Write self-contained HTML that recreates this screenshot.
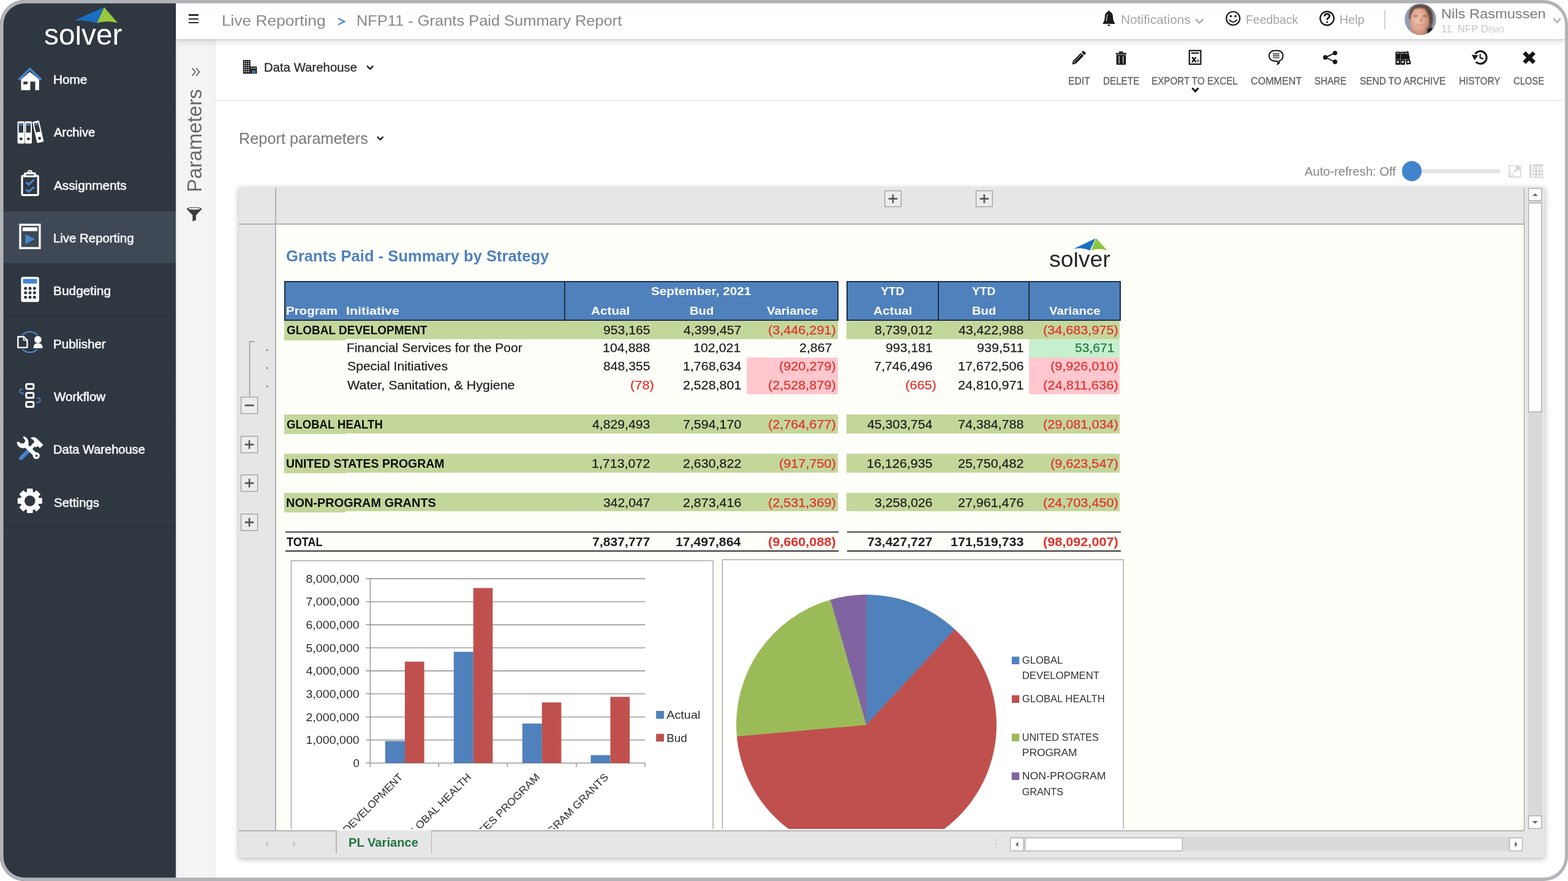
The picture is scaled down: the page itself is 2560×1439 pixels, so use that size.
<!DOCTYPE html>
<html lang="en">
<head>
<meta charset="utf-8">
<title>Solver - Live Reporting - NFP11 - Grants Paid Summary Report</title>
<style>
html,body{margin:0;padding:0;background:#fff;}
body{width:2560px;height:1439px;position:relative;font-family:"Liberation Sans",sans-serif;}
#app{position:absolute;left:0;top:0;width:2560px;height:1439px;overflow:hidden;filter:opacity(1);will-change:transform;}
.a{position:absolute;display:block;}
.t{position:absolute;white-space:pre;line-height:1;display:block;}
.rot{position:absolute;width:0;height:0;transform-origin:0 0;}
svg{overflow:visible;will-change:transform;}
svg text{font-family:"Liberation Sans",sans-serif;}
</style>
</head>
<body>
<div id="app">
<div class="a" style="left:288px;top:0px;width:2272px;height:1439px;background:#ffffff;"></div>
<aside id="sidebar">
<div id="side" class="a" style="left:0;top:0;width:287.2px;height:1439px;background:#2f3741"></div>
<div class="a" style="left:287.2px;top:64px;width:1.4px;height:1375px;background:rgba(0,0,0,.10);"></div>
<div class="a" style="left:0px;top:345.3px;width:287.2px;height:84.4px;background:#3e4955;"></div>
<div class="a" style="left:0px;top:84px;width:287.2px;height:1px;background:rgba(0,0,0,.13);"></div>
<div class="a" style="left:0px;top:85px;width:287.2px;height:1px;background:rgba(255,255,255,.025);"></div>
<div class="a" style="left:0px;top:170.33px;width:287.2px;height:1px;background:rgba(0,0,0,.13);"></div>
<div class="a" style="left:0px;top:171.33px;width:287.2px;height:1px;background:rgba(255,255,255,.025);"></div>
<div class="a" style="left:0px;top:256.66px;width:287.2px;height:1px;background:rgba(0,0,0,.13);"></div>
<div class="a" style="left:0px;top:257.66px;width:287.2px;height:1px;background:rgba(255,255,255,.025);"></div>
<div class="a" style="left:0px;top:515.65px;width:287.2px;height:1px;background:rgba(0,0,0,.13);"></div>
<div class="a" style="left:0px;top:516.65px;width:287.2px;height:1px;background:rgba(255,255,255,.025);"></div>
<div class="a" style="left:0px;top:601.98px;width:287.2px;height:1px;background:rgba(0,0,0,.13);"></div>
<div class="a" style="left:0px;top:602.98px;width:287.2px;height:1px;background:rgba(255,255,255,.025);"></div>
<div class="a" style="left:0px;top:688.31px;width:287.2px;height:1px;background:rgba(0,0,0,.13);"></div>
<div class="a" style="left:0px;top:689.31px;width:287.2px;height:1px;background:rgba(255,255,255,.025);"></div>
<div class="a" style="left:0px;top:774.64px;width:287.2px;height:1px;background:rgba(0,0,0,.13);"></div>
<div class="a" style="left:0px;top:775.64px;width:287.2px;height:1px;background:rgba(255,255,255,.025);"></div>
<div class="a" style="left:0px;top:860.97px;width:287.2px;height:1px;background:rgba(0,0,0,.13);"></div>
<div class="a" style="left:0px;top:861.97px;width:287.2px;height:1px;background:rgba(255,255,255,.025);"></div>
<div class="a" style="left:0px;top:343.6px;width:287.2px;height:1.7px;background:#2a313b;"></div>
<div class="a" style="left:0px;top:429.7px;width:287.2px;height:1.2px;background:#2c333d;"></div>
<svg class="a" style="left:118px;top:8px;" width="80" height="34" viewBox="118 8 80 34"><path d="M121 33.6 L168.9 12.2 L158.6 37.6 Q141 32.4 121 33.6Z" fill="#1a6fc4"/><path d="M170.0 11.8 L192.2 37.6 Q175 32.6 158.4 37.6Z" fill="#97c93d"/></svg>
<span class="t" style="left:71.61px;top:32px;font-size:48.5px;color:#ffffff;transform-origin:0 0;transform:scaleX(0.9858);clip-path:inset(10.5px -4px -12px -4px);">solver</span>
<span class="t" style="left:87.14px;top:121px;font-size:19.6px;color:#f4f4f4;transform-origin:0 0;transform:scaleX(1.0590);-webkit-text-stroke:0.62px #f4f4f4;">Home</span>
<span class="t" style="left:88.20px;top:207px;font-size:19.6px;color:#f4f4f4;transform-origin:0 0;transform:scaleX(1.0285);-webkit-text-stroke:0.62px #f4f4f4;">Archive</span>
<span class="t" style="left:88.20px;top:294px;font-size:19.6px;color:#f4f4f4;transform-origin:0 0;transform:scaleX(1.0572);-webkit-text-stroke:0.62px #f4f4f4;">Assignments</span>
<span class="t" style="left:87.16px;top:380px;font-size:19.6px;color:#f4f4f4;transform-origin:0 0;transform:scaleX(1.0406);-webkit-text-stroke:0.62px #f4f4f4;">Live Reporting</span>
<span class="t" style="left:87.13px;top:466px;font-size:19.6px;color:#f4f4f4;transform-origin:0 0;transform:scaleX(1.0654);-webkit-text-stroke:0.62px #f4f4f4;">Budgeting</span>
<span class="t" style="left:87.15px;top:553px;font-size:19.6px;color:#f4f4f4;transform-origin:0 0;transform:scaleX(1.0485);-webkit-text-stroke:0.62px #f4f4f4;">Publisher</span>
<span class="t" style="left:88.20px;top:639px;font-size:19.6px;color:#f4f4f4;transform-origin:0 0;transform:scaleX(1.0499);-webkit-text-stroke:0.62px #f4f4f4;">Workflow</span>
<span class="t" style="left:87.18px;top:725px;font-size:19.6px;color:#f4f4f4;transform-origin:0 0;transform:scaleX(1.0240);-webkit-text-stroke:0.62px #f4f4f4;">Data Warehouse</span>
<span class="t" style="left:88.20px;top:812px;font-size:19.6px;color:#f4f4f4;transform-origin:0 0;transform:scaleX(1.0451);-webkit-text-stroke:0.62px #f4f4f4;">Settings</span>
<svg class="a" style="left:26px;top:106px;" width="46" height="44" viewBox="26 106 46 44"><path d="M34.4 147.2V129.6L48.8 117.4 63.8 129.6V147.2H57.5V133.2H49.4V147.2Z M38.2 133.2H45V137.7H38.2Z" fill="#ffffff" fill-rule="evenodd"/><path d="M30.6 130.4L48.8 112.4 67.2 130.4" fill="none" stroke="#4586cb" stroke-width="3.6"/></svg>
<svg class="a" style="left:24px;top:192px;" width="52" height="48" viewBox="24 192 52 48"><rect x="28.6" y="198.2" width="11.4" height="36.2" rx="1.4" fill="#ffffff"/><rect x="30.6" y="201.4" width="7.4" height="15.2" fill="#2f3741"/><rect x="31.6" y="202.4" width="5.4" height="2.6" fill="#4586cb"/><circle cx="34.3" cy="226.8" r="2.4" fill="#2f3741"/><rect x="40.6" y="198.2" width="11.4" height="36.2" rx="1.4" fill="#ffffff"/><rect x="42.6" y="201.4" width="7.4" height="15.2" fill="#2f3741"/><rect x="43.6" y="202.4" width="5.4" height="2.6" fill="#4586cb"/><circle cx="46.3" cy="226.8" r="2.4" fill="#2f3741"/><g transform="rotate(-13 62.2 215.4)"><rect x="56.6" y="197.4" width="11.2" height="35.6" rx="1.4" fill="#ffffff"/><rect x="58.6" y="200.6" width="7.2" height="15.2" fill="#2f3741"/><rect x="59.6" y="201.6" width="5.2" height="2.6" fill="#4586cb"/><circle cx="62.2" cy="226" r="2.4" fill="#2f3741"/></g></svg>
<svg class="a" style="left:30px;top:274px;" width="40" height="50" viewBox="30 274 40 50"><rect x="36" y="287.2" width="26.2" height="31.4" rx="1.6" fill="none" stroke="#ffffff" stroke-width="3.2"/><path d="M39 289.6V284.6Q39 281.6 42 281.6H44.6Q45.2 277.6 48.9 277.6 52.6 277.6 53.2 281.6H55.8Q58.8 281.6 58.8 284.6V289.6Z" fill="#ffffff"/><rect x="42.2" y="284.4" width="13.4" height="2" rx="1" fill="#2f3741"/><circle cx="48.9" cy="280.6" r="1" fill="#2f3741"/><path d="M42.6 297.6L46.8 301.4 55.6 293.4" fill="none" stroke="#4586cb" stroke-width="3.2"/><path d="M42.6 309.6L46.8 313.4 55.6 305.4" fill="none" stroke="#4586cb" stroke-width="3.2"/></svg>
<svg class="a" style="left:28px;top:362px;" width="42" height="48" viewBox="28 362 42 48"><rect x="33" y="367.1" width="31.9" height="38.1" fill="none" stroke="#ffffff" stroke-width="3.4"/><rect x="36.9" y="371.3" width="24.1" height="6.2" fill="#ffffff"/><path d="M41.4 382.4L57 390.6 41.4 398.9Z" fill="#4586cb"/></svg>
<svg class="a" style="left:30px;top:448px;" width="40" height="50" viewBox="30 448 40 50"><rect x="34.4" y="452.2" width="29.4" height="41.1" rx="3" fill="#ffffff"/><rect x="37.5" y="455.6" width="23" height="7.6" rx="1.6" fill="#4586cb"/><circle cx="41.7" cy="471" r="2.5" fill="#2f3741"/><circle cx="41.7" cy="478.2" r="2.5" fill="#2f3741"/><circle cx="41.7" cy="485.5" r="2.5" fill="#2f3741"/><circle cx="49" cy="471" r="2.5" fill="#2f3741"/><circle cx="49" cy="478.2" r="2.5" fill="#2f3741"/><circle cx="49" cy="485.5" r="2.5" fill="#2f3741"/><circle cx="56.3" cy="471" r="2.5" fill="#2f3741"/><circle cx="56.3" cy="478.2" r="2.5" fill="#2f3741"/><circle cx="56.3" cy="485.5" r="2.5" fill="#2f3741"/></svg>
<svg class="a" style="left:24px;top:536px;" width="50" height="46" viewBox="24 536 50 46"><path d="M36 547.6A17 17 0 0 1 61.6 547.6" fill="none" stroke="#4586cb" stroke-width="2.2"/><path d="M36.8 570.6A17 17 0 0 0 60.8 570.6" fill="none" stroke="#4586cb" stroke-width="2.2"/><path d="M29.3 550V567.6H44.4V555.6L38.8 550Z" fill="none" stroke="#ffffff" stroke-width="2.4" stroke-linejoin="round"/><path d="M38.6 550V555.8H44.4" fill="none" stroke="#ffffff" stroke-width="1.6"/><circle cx="61.9" cy="554.6" r="5.9" fill="#ffffff"/><path d="M54.4 568.8Q54.4 560.4 61.9 560.4 69.8 560.4 69.8 568.8Z" fill="#ffffff"/></svg>
<svg class="a" style="left:28px;top:620px;" width="44" height="50" viewBox="28 620 44 50"><rect x="42.8" y="627.2" width="12" height="8" rx="1.6" fill="none" stroke="#ffffff" stroke-width="3"/><rect x="42.8" y="641.8" width="12" height="8" rx="1.6" fill="none" stroke="#ffffff" stroke-width="3"/><rect x="42.8" y="656.6" width="12" height="8" rx="1.6" fill="none" stroke="#ffffff" stroke-width="3"/><path d="M37.4 635.6Q31.8 634.6 32.2 639.4 32.8 642.6 37 642.4" fill="none" stroke="#4586cb" stroke-width="1.8"/><path d="M36.4 640.2L39.4 642.6 36.4 644.8Z" fill="#4586cb"/><path d="M60.6 650.4Q66.2 649.4 65.8 654.2 65.2 657.4 61 657.2" fill="none" stroke="#4586cb" stroke-width="1.8"/><path d="M61.6 655L58.6 657.4 61.6 659.6Z" fill="#4586cb"/></svg>
<svg class="a" style="left:24px;top:708px;" width="50" height="46" viewBox="24 708 50 46"><path d="M34.4 748.2L45.2 737.4" stroke="#4586cb" stroke-width="6.4" stroke-linecap="round" fill="none"/><path d="M42 727.4L58.4 743.6" stroke="#ffffff" stroke-width="6.6" fill="none"/><circle cx="59.2" cy="744.2" r="5.6" fill="#ffffff"/><circle cx="59.6" cy="744.6" r="1.9" fill="#2f3741"/><path d="M27.4 722.6Q28.2 731.6 37.6 732.2 44.6 731.6 46.6 725.2 47.6 716.6 39.4 712.4L37.4 713.8 41.4 719.8 39.6 724 34.6 724.6 30 721.2Z" fill="#ffffff"/><path d="M50.6 731.8L57.6 724.2" stroke="#ffffff" stroke-width="5.6" fill="none"/><path d="M50.6 714.6Q57.6 712.6 62.4 718.4L70.6 726.4 65.2 732 61.4 728.4 58.6 731 54.2 726.4 56.6 723.6Q55.6 718 50.6 716.2Z" fill="#ffffff"/></svg>
<svg class="a" style="left:26px;top:795px;" width="46" height="46" viewBox="26 795 46 46"><path d="M44.7 804.3 L45.0 799.0 L52.6 799.0 L52.9 804.3 L55.6 805.4 L59.6 801.9 L65.0 807.3 L61.5 811.3 L62.6 814.0 L67.9 814.3 L67.9 821.9 L62.6 822.2 L61.5 824.9 L65.0 828.9 L59.6 834.3 L55.6 830.8 L52.9 831.9 L52.6 837.2 L45.0 837.2 L44.7 831.9 L42.0 830.8 L38.0 834.3 L32.6 828.9 L36.1 824.9 L35.0 822.2 L29.7 821.9 L29.7 814.3 L35.0 814.0 L36.1 811.3 L32.6 807.3 L38.0 801.9 L42.0 805.4Z" fill="#ffffff" stroke="#ffffff" stroke-width="1.8" stroke-linejoin="round"/><circle cx="48.8" cy="818.1" r="8.8" fill="#2f3741"/></svg>
</aside>
<section id="params">
<div class="a" style="left:288.6px;top:64px;width:62.6px;height:1375px;background:#f4f4f4;"></div>
<div class="a" style="left:351.2px;top:64px;width:1px;height:1375px;background:#ebebeb;"></div>
<div class="a" style="left:352.2px;top:163.4px;width:2208px;height:1.3px;background:#eeeeee;"></div>
<svg class="a" style="left:310px;top:108px;" width="20" height="20" viewBox="310 108 20 20"><path d="M313.8 111.4L319 117.6 313.8 123.8M320.4 111.4L325.6 117.6 320.4 123.8" fill="none" stroke="#4a4a4a" stroke-width="1.5"/></svg>
<div class="rot" style="left:329.40px;top:312.20px;transform:rotate(-90deg)"><span class="t" style="left:-1.95px;top:-28.00px;font-size:33.4px;color:#686868;transform-origin:0 0;transform:scaleX(0.9766);">Parameters</span></div>
<svg class="a" style="left:302px;top:336px;" width="30" height="28" viewBox="302 336 30 28"><path d="M304.8 341.6Q304.8 338.4 317.2 338.4 329.6 338.4 329.6 341.6L320 351.4V359.4L314.4 361.4V351.4Z" fill="#3c3c3c"/><ellipse cx="317.2" cy="341" rx="10.2" ry="1.5" fill="#f4f4f4"/></svg>
</section>
<header id="topbar">
<div id="top" class="a" style="left:288px;top:0;width:2272px;height:63.8px;background:#fff;box-shadow:0 1px 3px rgba(0,0,0,.18),0 5px 12px rgba(0,0,0,.10)"></div>
<div class="a" style="left:308px;top:23.4px;width:16.2px;height:2.6px;background:#2b2b2b;"></div>
<div class="a" style="left:308px;top:29.6px;width:16.2px;height:2.6px;background:#2b2b2b;"></div>
<div class="a" style="left:308px;top:35.8px;width:16.2px;height:2.6px;background:#2b2b2b;"></div>
<span class="t" style="left:361.68px;top:22px;font-size:24.8px;color:#888888;transform-origin:0 0;transform:scaleX(1.0604);">Live Reporting</span>
<svg class="a" style="left:550px;top:26px;" width="16" height="18" viewBox="550 26 16 18"><path d="M552.2 30L562.4 35.2 552.2 40.4" fill="none" stroke="#3a85d6" stroke-width="2.1"/></svg>
<span class="t" style="left:582.45px;top:22px;font-size:24.8px;color:#888888;transform-origin:0 0;transform:scaleX(1.0252);">NFP11 - Grants Paid Summary Report</span>
<svg class="a" style="left:1798px;top:15px;" width="26" height="30" viewBox="1798 15 26 30"><path d="M1810.4 17.2Q1812.2 17.2 1812.2 19.2 1816.8 20.6 1817 27 1817.2 34.6 1820.2 37.8V39H1800.6V37.8Q1803.6 34.6 1803.8 27 1804 20.6 1808.6 19.2 1808.6 17.2 1810.4 17.2Z" fill="#1a1a1a"/><path d="M1808 40.2H1812.8Q1812.6 42.4 1810.4 42.4 1808.2 42.4 1808 40.2Z" fill="#1a1a1a"/><path d="M1806.4 34.8Q1807 26.4 1808.2 23.2" stroke="#fff" stroke-width="1" fill="none"/></svg>
<span class="t" style="left:1830.16px;top:22px;font-size:20.2px;color:#a4a4a4;transform-origin:0 0;transform:scaleX(1.0362);">Notifications</span>
<svg class="a" style="left:1949px;top:28px;" width="18" height="14" viewBox="1949 28 18 14"><path d="M1952 31.2L1958.2 37.6 1964.4 31.2" fill="none" stroke="#b0b0b0" stroke-width="2.8"/></svg>
<svg class="a" style="left:1999px;top:16px;" width="28" height="28" viewBox="1999 16 28 28"><circle cx="2013.2" cy="30" r="11" fill="none" stroke="#1a1a1a" stroke-width="2.2"/><circle cx="2009.4" cy="26.4" r="1.8" fill="#1a1a1a"/><circle cx="2017" cy="26.4" r="1.8" fill="#1a1a1a"/><path d="M2006.6 32.2Q2013.2 39.6 2019.8 32.2" fill="none" stroke="#1a1a1a" stroke-width="2"/></svg>
<span class="t" style="left:2033.84px;top:22px;font-size:20.2px;color:#a4a4a4;transform-origin:0 0;transform:scaleX(0.9620);">Feedback</span>
<svg class="a" style="left:2152px;top:16px;" width="30" height="28" viewBox="2152 16 30 28"><circle cx="2166.6" cy="30" r="11.2" fill="none" stroke="#1a1a1a" stroke-width="2.4"/><path d="M2162.6 26.6Q2162.8 22.8 2166.6 22.8 2170.6 22.8 2170.6 26.2 2170.6 28 2168.6 29.2 2166.8 30.4 2166.8 32.4" fill="none" stroke="#1a1a1a" stroke-width="3"/><circle cx="2166.8" cy="36" r="1.6" fill="#1a1a1a"/></svg>
<span class="t" style="left:2187.02px;top:22px;font-size:20.2px;color:#a4a4a4;transform-origin:0 0;transform:scaleX(0.9754);">Help</span>
<div class="a" style="left:2260.4px;top:16px;width:1.2px;height:31.6px;background:#d2d2d2;"></div>
<svg class="a" style="left:2290px;top:3px;" width="58" height="58" viewBox="2290 3 58 58"><defs><clipPath id="av"><circle cx="2319.1" cy="31.6" r="25.7"/></clipPath><radialGradient id="sk" cx="0.42" cy="0.40" r="0.62"><stop offset="0" stop-color="#f3c7b0"/><stop offset="0.55" stop-color="#e0a48e"/><stop offset="1" stop-color="#b67c68"/></radialGradient><filter id="bl" x="-20%" y="-20%" width="140%" height="140%"><feGaussianBlur stdDeviation="0.9"/></filter></defs><circle cx="2319.1" cy="31.6" r="25.7" fill="#919eb3"/><g clip-path="url(#av)"><g filter="url(#bl)"><path d="M2300.6 30Q2299.6 7.5 2318.6 7.2 2339.8 7 2339.8 31Q2339.6 42 2334 45L2303.6 36Z" fill="#5b463d"/><ellipse cx="2317.8" cy="36.5" rx="15.6" ry="25.6" fill="url(#sk)"/><path d="M2303.6 16.5Q2309 10.6 2318.6 10.4 2328.6 10.6 2333.4 17.6 2327 13.6 2318.6 13.8 2309.6 14 2303.6 16.5Z" fill="#6a5247"/><ellipse cx="2311.4" cy="25.9" rx="3.6" ry="1.5" fill="#6e4a3e" opacity=".75"/><ellipse cx="2326.2" cy="26.3" rx="3.4" ry="1.5" fill="#6e4a3e" opacity=".75"/><path d="M2320 27Q2321.6 32 2320.6 36.6 2318.2 36 2318.6 33Z" fill="#8c5a4b" opacity=".7"/><path d="M2310.6 39.8Q2318 42.6 2325.4 39.6 2318 45 2310.6 39.8Z" fill="#a5645a"/><path d="M2329.5 46.5L2337 44 2342 52 2330 58Z" fill="#1c212c"/></g></g></svg>
<span class="t" style="left:2353.04px;top:12px;font-size:22.3px;color:#7c7c7c;transform-origin:0 0;transform:scaleX(1.0600);">Nils Rasmussen</span>
<span class="t" style="left:2353.13px;top:39px;font-size:17.4px;color:#c8c8c8;transform-origin:0 0;transform:scaleX(0.9652);">11. NFP D</span>
<span class="t" style="left:2429.53px;top:42px;font-size:13px;color:#c8c8c8;transform-origin:0 0;transform:scaleX(0.8702);">EMO</span>
<svg class="a" style="left:2532px;top:26px;" width="20" height="16" viewBox="2532 26 20 16"><path d="M2536.2 30L2542 36.6 2547.8 30" fill="none" stroke="#b8b8b8" stroke-width="2.8"/></svg>
</header>
<section id="toolbar">
<svg class="a" style="left:395px;top:96px;" width="26" height="26" viewBox="395 96 26 26"><path d="M396.8 98H408.8V120.4H396.8Z" fill="#1c1c1c"/><path d="M408.8 108.6H419.4V120.4H408.8Z" fill="#1c1c1c"/><rect x="398.6" y="99.8" width="1.7" height="1.7" fill="#fff"/><rect x="401.8" y="99.8" width="1.7" height="1.7" fill="#fff"/><rect x="405" y="99.8" width="1.7" height="1.7" fill="#fff"/><rect x="398.6" y="103.1" width="1.7" height="1.7" fill="#fff"/><rect x="401.8" y="103.1" width="1.7" height="1.7" fill="#fff"/><rect x="405" y="103.1" width="1.7" height="1.7" fill="#fff"/><rect x="398.6" y="106.4" width="1.7" height="1.7" fill="#fff"/><rect x="401.8" y="106.4" width="1.7" height="1.7" fill="#fff"/><rect x="405" y="106.4" width="1.7" height="1.7" fill="#fff"/><rect x="398.6" y="109.7" width="1.7" height="1.7" fill="#fff"/><rect x="401.8" y="109.7" width="1.7" height="1.7" fill="#fff"/><rect x="405" y="109.7" width="1.7" height="1.7" fill="#fff"/><rect x="398.6" y="113" width="1.7" height="1.7" fill="#fff"/><rect x="401.8" y="113" width="1.7" height="1.7" fill="#fff"/><rect x="405" y="113" width="1.7" height="1.7" fill="#fff"/><rect x="398.6" y="116.3" width="1.7" height="1.7" fill="#fff"/><rect x="401.8" y="116.3" width="1.7" height="1.7" fill="#fff"/><rect x="405" y="116.3" width="1.7" height="1.7" fill="#fff"/><rect x="410.2" y="110.6" width="1.6" height="1.6" fill="#fff"/><rect x="413.2" y="110.6" width="1.6" height="1.6" fill="#fff"/><rect x="416.2" y="110.6" width="1.6" height="1.6" fill="#fff"/><rect x="411.6" y="115" width="5.4" height="5.4" fill="#5b8ec9"/><rect x="413.8" y="116.4" width="1.2" height="4" fill="#1c1c1c"/></svg>
<span class="t" style="left:431.22px;top:100px;font-size:20.7px;color:#2e2e2e;transform-origin:0 0;transform:scaleX(0.9845);-webkit-text-stroke:0.35px #2e2e2e;">Data Warehouse</span>
<svg class="a" style="left:596px;top:104px;" width="16" height="14" viewBox="596 104 16 14"><path d="M599.2 107.6L604.2 112.8 609.2 107.6" fill="none" stroke="#111" stroke-width="2.3"/></svg>
<span class="t" style="left:1744.45px;top:124px;font-size:16.5px;color:#5e5e5e;transform-origin:0 0;transform:scaleX(0.9451);-webkit-text-stroke:0.3px #5e5e5e;">EDIT</span>
<span class="t" style="left:1800.58px;top:124px;font-size:16.5px;color:#5e5e5e;transform-origin:0 0;transform:scaleX(0.9227);-webkit-text-stroke:0.3px #5e5e5e;">DELETE</span>
<span class="t" style="left:1879.88px;top:124px;font-size:16.5px;color:#5e5e5e;transform-origin:0 0;transform:scaleX(0.9208);-webkit-text-stroke:0.3px #5e5e5e;">EXPORT TO EXCEL</span>
<span class="t" style="left:2042.00px;top:124px;font-size:16.5px;color:#5e5e5e;transform-origin:0 0;transform:scaleX(0.9770);-webkit-text-stroke:0.3px #5e5e5e;">COMMENT</span>
<span class="t" style="left:2146.40px;top:124px;font-size:16.5px;color:#5e5e5e;transform-origin:0 0;transform:scaleX(0.9236);-webkit-text-stroke:0.3px #5e5e5e;">SHARE</span>
<span class="t" style="left:2220.20px;top:124px;font-size:16.5px;color:#5e5e5e;transform-origin:0 0;transform:scaleX(0.9346);-webkit-text-stroke:0.3px #5e5e5e;">SEND TO ARCHIVE</span>
<span class="t" style="left:2381.77px;top:124px;font-size:16.5px;color:#5e5e5e;transform-origin:0 0;transform:scaleX(0.9256);-webkit-text-stroke:0.3px #5e5e5e;">HISTORY</span>
<span class="t" style="left:2471.30px;top:124px;font-size:16.5px;color:#5e5e5e;transform-origin:0 0;transform:scaleX(0.8939);-webkit-text-stroke:0.3px #5e5e5e;">CLOSE</span>
<svg class="a" style="left:1748px;top:80px;" width="28" height="28" viewBox="1748 80 28 28"><path d="M1768.6 82.6L1773.2 87.2 1770.4 90 1765.8 85.4Z" fill="#161616"/><path d="M1764.8 86.4L1769.4 91 1756.2 104.2 1750.6 105.2 1751.6 99.6Z" fill="#161616"/><path d="M1766 88.6L1754 100.6" stroke="#fff" stroke-width="0.9" fill="none"/><path d="M1752.6 100.4L1755.4 103.2" stroke="#fff" stroke-width="0.9" fill="none"/></svg>
<svg class="a" style="left:1818px;top:81px;" width="26" height="28" viewBox="1818 81 26 28"><rect x="1821.6" y="86.4" width="17.6" height="2.4" rx="0.8" fill="#161616"/><rect x="1827" y="84" width="6.8" height="2.6" rx="0.8" fill="#161616"/><path d="M1822.6 89.6H1838.2V104.2Q1838.2 105.8 1836.6 105.8H1824.2Q1822.6 105.8 1822.6 104.2Z" fill="#161616"/><rect x="1826" y="91.4" width="2.2" height="12.4" fill="#9a9a9a"/><rect x="1832.6" y="91.4" width="2.2" height="12.4" fill="#9a9a9a"/></svg>
<svg class="a" style="left:1938px;top:79px;" width="26" height="30" viewBox="1938 79 26 30"><rect x="1941.8" y="82.6" width="18.6" height="22.2" fill="none" stroke="#161616" stroke-width="2.2"/><rect x="1944.8" y="85.6" width="12.6" height="2.2" fill="#161616"/><path d="M1946.2 93.2L1952.6 101.4M1952.6 93.2L1946.2 101.4" stroke="#161616" stroke-width="2.4" fill="none"/><rect x="1954" y="97.2" width="3.6" height="4.2" fill="#777"/></svg>
<svg class="a" style="left:1943px;top:140px;" width="18" height="14" viewBox="1943 140 18 14"><path d="M1946.4 143.8L1951.5 149.2 1956.6 143.8" fill="none" stroke="#111" stroke-width="3"/></svg>
<svg class="a" style="left:2068px;top:79px;" width="30" height="30" viewBox="2068 79 30 30"><path d="M2083.4 82.6Q2094.6 82.6 2094.6 91.2 2094.6 97.6 2088.6 99.4 2089.6 103 2086 104.6 2087.4 101.6 2085.2 100 2072 100.2 2072 91.2 2072 82.6 2083.4 82.6Z" fill="none" stroke="#161616" stroke-width="2"/><path d="M2078 88H2088.8M2078 91.2H2088.8M2078 94.4H2088.8" stroke="#161616" stroke-width="1.4" fill="none"/></svg>
<svg class="a" style="left:2157px;top:80px;" width="30" height="28" viewBox="2157 80 30 28"><path d="M2179.4 86.6L2164 93.8 2179.4 101" fill="none" stroke="#161616" stroke-width="1.9"/><circle cx="2179.6" cy="86.6" r="3.7" fill="#161616"/><circle cx="2163.8" cy="93.8" r="3.7" fill="#161616"/><circle cx="2179.6" cy="101" r="3.7" fill="#161616"/></svg>
<svg class="a" style="left:2275px;top:81px;" width="32" height="28" viewBox="2275 81 32 28"><rect x="2278.4" y="84.4" width="7.6" height="21.4" rx="0.8" fill="#161616"/><rect x="2280" y="86.2" width="4.4" height="1.8" fill="#9a9a9a"/><rect x="2280.6" y="99.8" width="3.2" height="3" fill="#fff"/><rect x="2278.4" y="96.8" width="7.6" height="1" fill="#777"/><rect x="2286.4" y="84.4" width="7.6" height="21.4" rx="0.8" fill="#161616"/><rect x="2288" y="86.2" width="4.4" height="1.8" fill="#9a9a9a"/><rect x="2288.6" y="99.8" width="3.2" height="3" fill="#fff"/><rect x="2286.4" y="96.8" width="7.6" height="1" fill="#777"/><g transform="rotate(-12 2298 95)"><rect x="2294.2" y="84.2" width="7.4" height="21" rx="0.8" fill="#161616"/><rect x="2295.8" y="86" width="4.2" height="1.8" fill="#9a9a9a"/><rect x="2296.4" y="99.6" width="3" height="3" fill="#fff"/><rect x="2294.2" y="96.6" width="7.4" height="1" fill="#777"/></g></svg>
<svg class="a" style="left:2400px;top:79px;" width="32" height="30" viewBox="2400 79 32 30"><path d="M2408.4 88.2A10.2 10.2 0 1 1 2409.6 101" fill="none" stroke="#161616" stroke-width="3.1"/><path d="M2402.8 89.6L2413.4 90.2 2407.4 98.4Z" fill="#161616"/><path d="M2416.6 88.2V94.4L2421.8 96.2" fill="none" stroke="#161616" stroke-width="2.2"/></svg>
<svg class="a" style="left:2483px;top:80px;" width="28" height="28" viewBox="2483 80 28 28"><path d="M2488.6 86L2504.6 102.2M2504.6 86L2488.6 102.2" stroke="#161616" stroke-width="6.6" fill="none"/></svg>
<span class="t" style="left:389.57px;top:214px;font-size:24.9px;color:#787878;transform-origin:0 0;transform:scaleX(1.0163);">Report parameters</span>
<svg class="a" style="left:613px;top:219px;" width="16" height="14" viewBox="613 219 16 14"><path d="M616 223.2L620.8 228.2 625.6 223.2" fill="none" stroke="#111" stroke-width="2.2"/></svg>
<span class="t" style="left:2129.60px;top:270px;font-size:20.5px;color:#868686;transform-origin:0 0;transform:scaleX(0.9851);">Auto-refresh: Off</span>
<div class="a" style="left:2305px;top:275.9px;width:144.5px;height:7.2px;background:#e4e4e4;border-radius:4px;"></div>
<div class="a" style="left:2289px;top:263.3px;width:32.4px;height:32.4px;background:#3f84cc;border-radius:50%;"></div>
<svg class="a" style="left:2460px;top:266px;" width="26" height="28" viewBox="2460 266 26 28"><rect x="2464" y="270.6" width="18.6" height="18.6" fill="none" stroke="#d4d4d4" stroke-width="1.6"/><rect x="2465.4" y="283.4" width="4.4" height="4.4" fill="none" stroke="#d4d4d4" stroke-width="1.2"/><path d="M2472 281L2479.6 273.4M2474.4 273.2H2479.8V278.6" stroke="#cfcfcf" stroke-width="2.4" fill="none"/></svg>
<svg class="a" style="left:2494px;top:266px;" width="28" height="28" viewBox="2494 266 28 28"><rect x="2497" y="268.4" width="3.2" height="22.4" fill="#d2d2d2"/><rect x="2502.2" y="268.4" width="17.2" height="3.4" fill="#d2d2d2"/><rect x="2502.8" y="274" width="4.6" height="4.6" fill="none" stroke="#d2d2d2" stroke-width="1.2"/><rect x="2508.5" y="274" width="4.6" height="4.6" fill="none" stroke="#d2d2d2" stroke-width="1.2"/><rect x="2514.2" y="274" width="4.6" height="4.6" fill="none" stroke="#d2d2d2" stroke-width="1.2"/><rect x="2502.8" y="279.7" width="4.6" height="4.6" fill="none" stroke="#d2d2d2" stroke-width="1.2"/><rect x="2508.5" y="279.7" width="4.6" height="4.6" fill="none" stroke="#d2d2d2" stroke-width="1.2"/><rect x="2514.2" y="279.7" width="4.6" height="4.6" fill="none" stroke="#d2d2d2" stroke-width="1.2"/><rect x="2502.8" y="285.4" width="4.6" height="4.6" fill="none" stroke="#d2d2d2" stroke-width="1.2"/><rect x="2508.5" y="285.4" width="4.6" height="4.6" fill="none" stroke="#d2d2d2" stroke-width="1.2"/><rect x="2514.2" y="285.4" width="4.6" height="4.6" fill="none" stroke="#d2d2d2" stroke-width="1.2"/></svg>
</section>
<main id="report">
<div id="sheet" class="a" style="left:389.6px;top:305.8px;width:2132.8px;height:1095.2px;background:#e6e6e6;box-shadow:0 2px 9px rgba(0,0,0,.30)"></div>
<div class="a" style="left:451.4px;top:367.4px;width:2036.2px;height:988.4px;background:#fefff9;"></div>
<div class="a" style="left:389.6px;top:365.4px;width:2098px;height:1.9px;background:#b2b2b2;"></div>
<div class="a" style="left:449.2px;top:305.8px;width:2px;height:1050px;background:#b2b2b2;"></div>
<div class="a" style="left:2487.7px;top:305.8px;width:1.6px;height:1051px;background:#9a9a9a;"></div>
<div class="a" style="left:389.6px;top:1355.9px;width:159.4px;height:1.8px;background:#b4b4b4;"></div>
<div class="a" style="left:704px;top:1355.9px;width:1783.6px;height:1.8px;background:#b4b4b4;"></div>
<div class="a" style="left:548.2px;top:1356px;width:1.6px;height:38px;background:#b4b4b4;"></div>
<div class="a" style="left:703.6px;top:1356px;width:1.6px;height:38px;background:#b4b4b4;"></div>
<div class="a" style="left:550px;top:1355.8px;width:153.6px;height:2px;background:#e9e9e9;"></div>
<svg class="a" style="left:1443.2px;top:309.8px;" width="29.8" height="29.2" viewBox="1443.2 309.8 29.8 29.2"><rect x="1444.8" y="311.4" width="26.6" height="26" fill="#ececec" stroke="#9d9d9d" stroke-width="1.3"/><path d="M1450.9 324.4H1465.3M1458.1 317.2V331.6" stroke="#555" stroke-width="2.6" fill="none"/></svg>
<svg class="a" style="left:1592px;top:309.8px;" width="29.8" height="29.2" viewBox="1592 309.8 29.8 29.2"><rect x="1593.6" y="311.4" width="26.6" height="26" fill="#ececec" stroke="#9d9d9d" stroke-width="1.3"/><path d="M1599.7 324.4H1614.1M1606.9 317.2V331.6" stroke="#555" stroke-width="2.6" fill="none"/></svg>
<svg class="a" style="left:400px;top:552px;" width="44" height="100" viewBox="400 552 44 100"><path d="M415.4 557.8H407.6V647.6" fill="none" stroke="#9a9a9a" stroke-width="1.5"/><circle cx="436.3" cy="572" r="1.6" fill="#8f8f8f"/><circle cx="436.3" cy="601.1" r="1.6" fill="#8f8f8f"/><circle cx="436.3" cy="631.1" r="1.6" fill="#8f8f8f"/></svg>
<svg class="a" style="left:392.2px;top:646.5px;" width="30.2" height="30.2" viewBox="392.2 646.5 30.2 30.2"><rect x="393.8" y="648.1" width="27" height="27" fill="#ececec" stroke="#9d9d9d" stroke-width="1.3"/><path d="M399.9 661.6H414.7" stroke="#555" stroke-width="2.8" fill="none"/></svg>
<svg class="a" style="left:392.2px;top:710.5px;" width="30.2" height="30.2" viewBox="392.2 710.5 30.2 30.2"><rect x="393.8" y="712.1" width="27" height="27" fill="#ececec" stroke="#9d9d9d" stroke-width="1.3"/><path d="M400.1 725.6H414.5M407.3 718.4V732.8" stroke="#555" stroke-width="2.6" fill="none"/></svg>
<svg class="a" style="left:392.2px;top:774.4px;" width="30.2" height="30.2" viewBox="392.2 774.4 30.2 30.2"><rect x="393.8" y="776" width="27" height="27" fill="#ececec" stroke="#9d9d9d" stroke-width="1.3"/><path d="M400.1 789.5H414.5M407.3 782.3V796.7" stroke="#555" stroke-width="2.6" fill="none"/></svg>
<svg class="a" style="left:392.2px;top:838.2px;" width="30.2" height="30.2" viewBox="392.2 838.2 30.2 30.2"><rect x="393.8" y="839.8" width="27" height="27" fill="#ececec" stroke="#9d9d9d" stroke-width="1.3"/><path d="M400.1 853.3H414.5M407.3 846.1V860.5" stroke="#555" stroke-width="2.6" fill="none"/></svg>
<div class="a" style="left:2495.3px;top:307.4px;width:22.6px;height:1046.4px;background:#d9d9d9;"></div>
<svg class="a" style="left:2494.3px;top:306.4px;" width="24.6" height="23.2" viewBox="2494.3 306.4 24.6 23.2"><rect x="2495.9" y="308" width="21.4" height="20" fill="#fff" stroke="#a8a8a8" stroke-width="1.3"/><polygon points="2502,320.7 2511.2,320.7 2506.6,316.1" fill="#6a6a6a"/></svg>
<svg class="a" style="left:2494.3px;top:330.2px;" width="24.6" height="344.4" viewBox="2494.3 330.2 24.6 344.4"><rect x="2495.9" y="331.8" width="21.4" height="341.2" fill="#fff" stroke="#a8a8a8" stroke-width="1.3"/></svg>
<svg class="a" style="left:2494.3px;top:1330.8px;" width="24.6" height="23.8" viewBox="2494.3 1330.8 24.6 23.8"><rect x="2495.9" y="1332.4" width="21.4" height="20.6" fill="#fff" stroke="#a8a8a8" stroke-width="1.3"/><polygon points="2502,1340.7 2511.2,1340.7 2506.6,1345.3" fill="#6a6a6a"/></svg>
<div class="a" style="left:1649px;top:1367.4px;width:837.4px;height:22.8px;background:#dadada;"></div>
<svg class="a" style="left:1648px;top:1366.6px;" width="24.6" height="24.4" viewBox="1648 1366.6 24.6 24.4"><rect x="1649.6" y="1368.2" width="21.4" height="21.2" fill="#fff" stroke="#b0b0b0" stroke-width="1.3"/><polygon points="1662.4,1374.4 1662.4,1383.2 1658,1378.8" fill="#6a6a6a"/></svg>
<svg class="a" style="left:1672.4px;top:1366.6px;" width="260" height="24.4" viewBox="1672.4 1366.6 260 24.4"><rect x="1674" y="1368.2" width="256.8" height="21.2" fill="#fff" stroke="#b0b0b0" stroke-width="1.3"/></svg>
<svg class="a" style="left:2463.4px;top:1366.6px;" width="24" height="24.4" viewBox="2463.4 1366.6 24 24.4"><rect x="2465" y="1368.2" width="20.8" height="21.2" fill="#fff" stroke="#b0b0b0" stroke-width="1.3"/><polygon points="2473.6,1374.4 2473.6,1383.2 2478,1378.8" fill="#6a6a6a"/></svg>
<svg class="a" style="left:1622px;top:1368px;" width="8" height="24" viewBox="1622 1368 8 24"><rect x="1625.2" y="1372" width="1.8" height="1.8" fill="#b9b9b9"/><rect x="1625.2" y="1378" width="1.8" height="1.8" fill="#b9b9b9"/><rect x="1625.2" y="1384" width="1.8" height="1.8" fill="#b9b9b9"/></svg>
<svg class="a" style="left:428px;top:1372px;" width="60" height="14" viewBox="428 1372 60 14"><polygon points="437.5,1374.6 437.5,1383.8 432.9,1379.2" fill="#c6c6c6"/><polygon points="478.5,1374.6 478.5,1383.8 483.1,1379.2" fill="#c6c6c6"/></svg>
<span class="t" style="left:569.29px;top:1366px;font-size:20px;color:#217346;font-weight:bold;transform-origin:0 0;transform:scaleX(1.0082);">PL Variance</span>
<span class="t" style="left:466.79px;top:406px;font-size:25.4px;color:#4f81bd;font-weight:bold;transform-origin:0 0;transform:scaleX(1.0075);">Grants Paid - Summary by Strategy</span>
<svg class="a" style="left:1750px;top:386px;" width="62" height="26" viewBox="1750 386 62 26"><path d="M1752.6 406.6 L1788.6 389.6 L1779.2 409.2 Q1767 403.6 1752.6 406.6Z" fill="#1a6fc4"/><path d="M1789.6 389.2 L1807.6 408.8 Q1794.4 404.8 1781.2 408.8Z" fill="#8dc63f"/></svg>
<span class="t" style="left:1713.00px;top:405px;font-size:37.4px;color:#262626;clip-path:inset(7px -4px -10px -4px);">solver</span>
<div class="a" style="left:463.6px;top:458.6px;width:905.6px;height:65.6px;background:#4f81bd;box-sizing:border-box;border:2px solid #1f2f47;"></div>
<div class="a" style="left:920.6px;top:458.6px;width:2px;height:65.6px;background:#1f2f47;"></div>
<div class="a" style="left:1382.2px;top:458.6px;width:448px;height:65.6px;background:#4f81bd;box-sizing:border-box;border:2px solid #1f2f47;"></div>
<div class="a" style="left:1530.8px;top:458.6px;width:2px;height:65.6px;background:#1f2f47;"></div>
<div class="a" style="left:1679.4px;top:458.6px;width:2px;height:65.6px;background:#1f2f47;"></div>
<span class="t" style="left:466.73px;top:498px;font-size:19.2px;color:#ffffff;font-weight:bold;transform-origin:0 0;transform:scaleX(1.0671);">Program</span>
<span class="t" style="left:565.08px;top:498px;font-size:19.2px;color:#ffffff;font-weight:bold;transform-origin:0 0;transform:scaleX(1.1171);">Initiative</span>
<span class="t" style="left:1063.05px;top:466px;font-size:19.2px;color:#ffffff;font-weight:bold;transform-origin:0 0;transform:scaleX(1.0772);">September, 2021</span>
<span class="t" style="left:965.45px;top:498px;font-size:19.2px;color:#ffffff;font-weight:bold;transform-origin:0 0;transform:scaleX(1.0801);">Actual</span>
<span class="t" style="left:1125.50px;top:498px;font-size:19.2px;color:#ffffff;font-weight:bold;transform-origin:0 0;transform:scaleX(1.0540);">Bud</span>
<span class="t" style="left:1252.05px;top:498px;font-size:19.2px;color:#ffffff;font-weight:bold;transform-origin:0 0;transform:scaleX(1.0584);">Variance</span>
<span class="t" style="left:1437.80px;top:466px;font-size:19.2px;color:#ffffff;font-weight:bold;transform-origin:0 0;transform:scaleX(0.9969);">YTD</span>
<span class="t" style="left:1426.05px;top:498px;font-size:19.2px;color:#ffffff;font-weight:bold;transform-origin:0 0;transform:scaleX(1.0801);">Actual</span>
<span class="t" style="left:1587.20px;top:466px;font-size:19.2px;color:#ffffff;font-weight:bold;transform-origin:0 0;transform:scaleX(0.9969);">YTD</span>
<span class="t" style="left:1586.60px;top:498px;font-size:19.2px;color:#ffffff;font-weight:bold;transform-origin:0 0;transform:scaleX(1.0540);">Bud</span>
<span class="t" style="left:1712.95px;top:498px;font-size:19.2px;color:#ffffff;font-weight:bold;transform-origin:0 0;transform:scaleX(1.0584);">Variance</span>
<div class="a" style="left:463.8px;top:524.1px;width:100.1px;height:31.6px;background:#c4d79b;"></div>
<div class="a" style="left:564px;top:524.1px;width:803.6px;height:30.2px;background:#c4d79b;"></div>
<div class="a" style="left:1382.2px;top:524.1px;width:446.2px;height:30.2px;background:#c4d79b;"></div>
<span class="t" style="left:467.60px;top:530px;font-size:19.3px;color:#0c0c0c;font-weight:bold;transform-origin:0 0;transform:scaleX(0.9840);">GLOBAL DEVELOPMENT</span>
<span class="t" style="left:985.00px;top:529px;font-size:20.3px;color:#1d1d1d;transform-origin:0 0;transform:scaleX(1.0420);-webkit-text-stroke:0.25px #1d1d1d;">953,165</span>
<span class="t" style="left:1115.60px;top:529px;font-size:20.3px;color:#1d1d1d;transform-origin:0 0;transform:scaleX(1.0451);-webkit-text-stroke:0.25px #1d1d1d;">4,399,457</span>
<span class="t" style="left:1254.43px;top:529px;font-size:20.3px;color:#e2312b;transform-origin:0 0;transform:scaleX(1.0669);-webkit-text-stroke:0.25px #e2312b;">(3,446,291)</span>
<span class="t" style="left:1428.00px;top:529px;font-size:20.3px;color:#1d1d1d;transform-origin:0 0;transform:scaleX(1.0451);-webkit-text-stroke:0.25px #1d1d1d;">8,739,012</span>
<span class="t" style="left:1564.80px;top:529px;font-size:20.3px;color:#1d1d1d;transform-origin:0 0;transform:scaleX(1.0472);-webkit-text-stroke:0.25px #1d1d1d;">43,422,988</span>
<span class="t" style="left:1703.43px;top:529px;font-size:20.3px;color:#e2312b;transform-origin:0 0;transform:scaleX(1.0666);-webkit-text-stroke:0.25px #e2312b;">(34,683,975)</span>
<div class="a" style="left:463.8px;top:676.7px;width:100.1px;height:32.6px;background:#c4d79b;"></div>
<div class="a" style="left:564px;top:676.7px;width:803.6px;height:31.2px;background:#c4d79b;"></div>
<div class="a" style="left:1382.2px;top:676.7px;width:446.2px;height:31.2px;background:#c4d79b;"></div>
<span class="t" style="left:467.60px;top:684px;font-size:19.3px;color:#0c0c0c;font-weight:bold;transform-origin:0 0;transform:scaleX(0.9607);">GLOBAL HEALTH</span>
<span class="t" style="left:967.10px;top:683px;font-size:20.3px;color:#1d1d1d;transform-origin:0 0;transform:scaleX(1.0451);-webkit-text-stroke:0.25px #1d1d1d;">4,829,493</span>
<span class="t" style="left:1114.54px;top:683px;font-size:20.3px;color:#1d1d1d;transform-origin:0 0;transform:scaleX(1.0568);-webkit-text-stroke:0.25px #1d1d1d;">7,594,170</span>
<span class="t" style="left:1254.43px;top:683px;font-size:20.3px;color:#e2312b;transform-origin:0 0;transform:scaleX(1.0669);-webkit-text-stroke:0.25px #e2312b;">(2,764,677)</span>
<span class="t" style="left:1416.00px;top:683px;font-size:20.3px;color:#1d1d1d;transform-origin:0 0;transform:scaleX(1.0472);-webkit-text-stroke:0.25px #1d1d1d;">45,303,754</span>
<span class="t" style="left:1563.74px;top:683px;font-size:20.3px;color:#1d1d1d;transform-origin:0 0;transform:scaleX(1.0576);-webkit-text-stroke:0.25px #1d1d1d;">74,384,788</span>
<span class="t" style="left:1703.43px;top:683px;font-size:20.3px;color:#e2312b;transform-origin:0 0;transform:scaleX(1.0666);-webkit-text-stroke:0.25px #e2312b;">(29,081,034)</span>
<div class="a" style="left:463.8px;top:740.7px;width:100.1px;height:32.3px;background:#c4d79b;"></div>
<div class="a" style="left:564px;top:740.7px;width:803.6px;height:30.9px;background:#c4d79b;"></div>
<div class="a" style="left:1382.2px;top:740.7px;width:446.2px;height:30.9px;background:#c4d79b;"></div>
<span class="t" style="left:466.59px;top:748px;font-size:19.3px;color:#0c0c0c;font-weight:bold;transform-origin:0 0;transform:scaleX(1.0082);">UNITED STATES PROGRAM</span>
<span class="t" style="left:966.04px;top:747px;font-size:20.3px;color:#1d1d1d;transform-origin:0 0;transform:scaleX(1.0568);-webkit-text-stroke:0.25px #1d1d1d;">1,713,072</span>
<span class="t" style="left:1114.54px;top:747px;font-size:20.3px;color:#1d1d1d;transform-origin:0 0;transform:scaleX(1.0568);-webkit-text-stroke:0.25px #1d1d1d;">2,630,822</span>
<span class="t" style="left:1272.33px;top:747px;font-size:20.3px;color:#e2312b;transform-origin:0 0;transform:scaleX(1.0686);-webkit-text-stroke:0.25px #e2312b;">(917,750)</span>
<span class="t" style="left:1414.94px;top:747px;font-size:20.3px;color:#1d1d1d;transform-origin:0 0;transform:scaleX(1.0576);-webkit-text-stroke:0.25px #1d1d1d;">16,126,935</span>
<span class="t" style="left:1563.74px;top:747px;font-size:20.3px;color:#1d1d1d;transform-origin:0 0;transform:scaleX(1.0576);-webkit-text-stroke:0.25px #1d1d1d;">25,750,482</span>
<span class="t" style="left:1715.43px;top:747px;font-size:20.3px;color:#e2312b;transform-origin:0 0;transform:scaleX(1.0669);-webkit-text-stroke:0.25px #e2312b;">(9,623,547)</span>
<div class="a" style="left:463.8px;top:804.6px;width:100.1px;height:32.3px;background:#c4d79b;"></div>
<div class="a" style="left:564px;top:804.6px;width:803.6px;height:30.9px;background:#c4d79b;"></div>
<div class="a" style="left:1382.2px;top:804.6px;width:446.2px;height:30.9px;background:#c4d79b;"></div>
<span class="t" style="left:466.57px;top:812px;font-size:19.3px;color:#0c0c0c;font-weight:bold;transform-origin:0 0;transform:scaleX(1.0345);">NON-PROGRAM GRANTS</span>
<span class="t" style="left:985.00px;top:811px;font-size:20.3px;color:#1d1d1d;transform-origin:0 0;transform:scaleX(1.0420);-webkit-text-stroke:0.25px #1d1d1d;">342,047</span>
<span class="t" style="left:1114.54px;top:811px;font-size:20.3px;color:#1d1d1d;transform-origin:0 0;transform:scaleX(1.0568);-webkit-text-stroke:0.25px #1d1d1d;">2,873,416</span>
<span class="t" style="left:1254.43px;top:811px;font-size:20.3px;color:#e2312b;transform-origin:0 0;transform:scaleX(1.0669);-webkit-text-stroke:0.25px #e2312b;">(2,531,369)</span>
<span class="t" style="left:1428.00px;top:811px;font-size:20.3px;color:#1d1d1d;transform-origin:0 0;transform:scaleX(1.0451);-webkit-text-stroke:0.25px #1d1d1d;">3,258,026</span>
<span class="t" style="left:1563.74px;top:811px;font-size:20.3px;color:#1d1d1d;transform-origin:0 0;transform:scaleX(1.0576);-webkit-text-stroke:0.25px #1d1d1d;">27,961,476</span>
<span class="t" style="left:1703.43px;top:811px;font-size:20.3px;color:#e2312b;transform-origin:0 0;transform:scaleX(1.0666);-webkit-text-stroke:0.25px #e2312b;">(24,703,450)</span>
<div class="a" style="left:1219.4px;top:583.8px;width:148.2px;height:59.8px;background:#ffc7ce;"></div>
<div class="a" style="left:1680.4px;top:554.3px;width:148px;height:29.6px;background:#c6efce;"></div>
<div class="a" style="left:1680.4px;top:583.8px;width:148px;height:59.8px;background:#ffc7ce;"></div>
<span class="t" style="left:566.43px;top:559px;font-size:19.7px;color:#1d1d1d;transform-origin:0 0;transform:scaleX(1.0698);-webkit-text-stroke:0.25px #1d1d1d;">Financial Services for the Poor</span>
<span class="t" style="left:983.94px;top:558px;font-size:20.3px;color:#1d1d1d;transform-origin:0 0;transform:scaleX(1.0565);-webkit-text-stroke:0.25px #1d1d1d;">104,888</span>
<span class="t" style="left:1132.44px;top:558px;font-size:20.3px;color:#1d1d1d;transform-origin:0 0;transform:scaleX(1.0565);-webkit-text-stroke:0.25px #1d1d1d;">102,021</span>
<span class="t" style="left:1305.25px;top:558px;font-size:20.3px;color:#1d1d1d;transform-origin:0 0;transform:scaleX(1.0531);-webkit-text-stroke:0.25px #1d1d1d;">2,867</span>
<span class="t" style="left:1445.90px;top:558px;font-size:20.3px;color:#1d1d1d;transform-origin:0 0;transform:scaleX(1.0420);-webkit-text-stroke:0.25px #1d1d1d;">993,181</span>
<span class="t" style="left:1594.70px;top:558px;font-size:20.3px;color:#1d1d1d;transform-origin:0 0;transform:scaleX(1.0639);-webkit-text-stroke:0.25px #1d1d1d;">939,511</span>
<span class="t" style="left:1755.30px;top:558px;font-size:20.3px;color:#1c7c3c;transform-origin:0 0;transform:scaleX(1.0380);-webkit-text-stroke:0.25px #1c7c3c;">53,671</span>
<span class="t" style="left:566.70px;top:589px;font-size:19.7px;color:#1d1d1d;transform-origin:0 0;transform:scaleX(1.0784);-webkit-text-stroke:0.25px #1d1d1d;">Special Initiatives</span>
<span class="t" style="left:985.00px;top:588px;font-size:20.3px;color:#1d1d1d;transform-origin:0 0;transform:scaleX(1.0420);-webkit-text-stroke:0.25px #1d1d1d;">848,355</span>
<span class="t" style="left:1114.54px;top:588px;font-size:20.3px;color:#1d1d1d;transform-origin:0 0;transform:scaleX(1.0568);-webkit-text-stroke:0.25px #1d1d1d;">1,768,634</span>
<span class="t" style="left:1272.33px;top:588px;font-size:20.3px;color:#e2312b;transform-origin:0 0;transform:scaleX(1.0686);-webkit-text-stroke:0.25px #e2312b;">(920,279)</span>
<span class="t" style="left:1426.94px;top:588px;font-size:20.3px;color:#1d1d1d;transform-origin:0 0;transform:scaleX(1.0568);-webkit-text-stroke:0.25px #1d1d1d;">7,746,496</span>
<span class="t" style="left:1563.74px;top:588px;font-size:20.3px;color:#1d1d1d;transform-origin:0 0;transform:scaleX(1.0576);-webkit-text-stroke:0.25px #1d1d1d;">17,672,506</span>
<span class="t" style="left:1715.43px;top:588px;font-size:20.3px;color:#e2312b;transform-origin:0 0;transform:scaleX(1.0669);-webkit-text-stroke:0.25px #e2312b;">(9,926,010)</span>
<span class="t" style="left:567.10px;top:620px;font-size:19.7px;color:#1d1d1d;transform-origin:0 0;transform:scaleX(1.0900);-webkit-text-stroke:0.25px #1d1d1d;">Water, Sanitation, &amp; Hygiene</span>
<span class="t" style="left:1028.92px;top:619px;font-size:20.3px;color:#e2312b;transform-origin:0 0;transform:scaleX(1.0783);-webkit-text-stroke:0.25px #e2312b;">(78)</span>
<span class="t" style="left:1114.54px;top:619px;font-size:20.3px;color:#1d1d1d;transform-origin:0 0;transform:scaleX(1.0568);-webkit-text-stroke:0.25px #1d1d1d;">2,528,801</span>
<span class="t" style="left:1254.43px;top:619px;font-size:20.3px;color:#e2312b;transform-origin:0 0;transform:scaleX(1.0669);-webkit-text-stroke:0.25px #e2312b;">(2,528,879)</span>
<span class="t" style="left:1477.83px;top:619px;font-size:20.3px;color:#e2312b;transform-origin:0 0;transform:scaleX(1.0747);-webkit-text-stroke:0.25px #e2312b;">(665)</span>
<span class="t" style="left:1563.74px;top:619px;font-size:20.3px;color:#1d1d1d;transform-origin:0 0;transform:scaleX(1.0576);-webkit-text-stroke:0.25px #1d1d1d;">24,810,971</span>
<span class="t" style="left:1703.42px;top:619px;font-size:20.3px;color:#e2312b;transform-origin:0 0;transform:scaleX(1.0810);-webkit-text-stroke:0.25px #e2312b;">(24,811,636)</span>
<div class="a" style="left:465.6px;top:868.4px;width:903.6px;height:2px;background:#444444;"></div>
<div class="a" style="left:465.6px;top:899.3px;width:903.6px;height:2.1px;background:#333333;"></div>
<div class="a" style="left:1383.4px;top:868.4px;width:446.8px;height:2px;background:#444444;"></div>
<div class="a" style="left:1383.4px;top:899.3px;width:446.8px;height:2.1px;background:#333333;"></div>
<span class="t" style="left:467.80px;top:876px;font-size:19.3px;color:#0c0c0c;font-weight:bold;transform-origin:0 0;transform:scaleX(0.9378);">TOTAL</span>
<span class="t" style="left:967.10px;top:875px;font-size:20.3px;color:#1d1d1d;font-weight:bold;transform-origin:0 0;transform:scaleX(1.0451);">7,837,777</span>
<span class="t" style="left:1102.55px;top:875px;font-size:20.3px;color:#1d1d1d;font-weight:bold;transform-origin:0 0;transform:scaleX(1.0472);">17,497,864</span>
<span class="t" style="left:1254.43px;top:875px;font-size:20.3px;color:#e2312b;font-weight:bold;transform-origin:0 0;transform:scaleX(1.0669);">(9,660,088)</span>
<span class="t" style="left:1416.00px;top:875px;font-size:20.3px;color:#1d1d1d;font-weight:bold;transform-origin:0 0;transform:scaleX(1.0472);">73,427,727</span>
<span class="t" style="left:1551.74px;top:875px;font-size:20.3px;color:#1d1d1d;font-weight:bold;transform-origin:0 0;transform:scaleX(1.0582);">171,519,733</span>
<span class="t" style="left:1703.43px;top:875px;font-size:20.3px;color:#e2312b;font-weight:bold;transform-origin:0 0;transform:scaleX(1.0666);">(98,092,007)</span>
<svg class="a" style="left:470px;top:910px;overflow:hidden;" width="700" height="444.2" viewBox="470 910 700 444.2"><rect x="475.4" y="915.8" width="688.8" height="460" fill="#fff" stroke="#9e9e9e" stroke-width="1.3"/><path d="M597.4 1246.3H1053.4" stroke="#8a8a8a" stroke-width="1.3" fill="none"/><path d="M597.4 1208.67H1053.4" stroke="#8a8a8a" stroke-width="1.3" fill="none"/><path d="M597.4 1171.04H1053.4" stroke="#8a8a8a" stroke-width="1.3" fill="none"/><path d="M597.4 1133.41H1053.4" stroke="#8a8a8a" stroke-width="1.3" fill="none"/><path d="M597.4 1095.78H1053.4" stroke="#8a8a8a" stroke-width="1.3" fill="none"/><path d="M597.4 1058.15H1053.4" stroke="#8a8a8a" stroke-width="1.3" fill="none"/><path d="M597.4 1020.52H1053.4" stroke="#8a8a8a" stroke-width="1.3" fill="none"/><path d="M597.4 982.89H1053.4" stroke="#8a8a8a" stroke-width="1.3" fill="none"/><path d="M597.4 945.26H1053.4" stroke="#8a8a8a" stroke-width="1.3" fill="none"/><path d="M604.4 945V1253" stroke="#8a8a8a" stroke-width="1.3" fill="none"/><path d="M716.2 1246.3V1253" stroke="#8a8a8a" stroke-width="1.3" fill="none"/><path d="M828.4 1246.3V1253" stroke="#8a8a8a" stroke-width="1.3" fill="none"/><path d="M940.8 1246.3V1253" stroke="#8a8a8a" stroke-width="1.3" fill="none"/><path d="M1053 1246.3V1253" stroke="#8a8a8a" stroke-width="1.3" fill="none"/><rect x="629" y="1210.4" width="32" height="35.9" fill="#4f81bd"/><rect x="661" y="1080.7" width="31.6" height="165.6" fill="#c0504d"/><rect x="740.8" y="1064.6" width="32" height="181.7" fill="#4f81bd"/><rect x="772.8" y="960.5" width="31.6" height="285.8" fill="#c0504d"/><rect x="852.8" y="1181.8" width="32" height="64.5" fill="#4f81bd"/><rect x="884.8" y="1147.3" width="31.6" height="99.0" fill="#c0504d"/><rect x="964.5" y="1233.4" width="32" height="12.9" fill="#4f81bd"/><rect x="996.5" y="1138.2" width="31.6" height="108.1" fill="#c0504d"/><text x="586.8" y="951.8" font-size="17.8" fill="#2a2a2a" text-anchor="end" textLength="87.4" lengthAdjust="spacingAndGlyphs">8,000,000</text><text x="586.8" y="989.43" font-size="17.8" fill="#2a2a2a" text-anchor="end" textLength="87.4" lengthAdjust="spacingAndGlyphs">7,000,000</text><text x="586.8" y="1027.06" font-size="17.8" fill="#2a2a2a" text-anchor="end" textLength="87.4" lengthAdjust="spacingAndGlyphs">6,000,000</text><text x="586.8" y="1064.69" font-size="17.8" fill="#2a2a2a" text-anchor="end" textLength="87.4" lengthAdjust="spacingAndGlyphs">5,000,000</text><text x="586.8" y="1102.32" font-size="17.8" fill="#2a2a2a" text-anchor="end" textLength="87.4" lengthAdjust="spacingAndGlyphs">4,000,000</text><text x="586.8" y="1139.95" font-size="17.8" fill="#2a2a2a" text-anchor="end" textLength="87.4" lengthAdjust="spacingAndGlyphs">3,000,000</text><text x="586.8" y="1177.58" font-size="17.8" fill="#2a2a2a" text-anchor="end" textLength="87.4" lengthAdjust="spacingAndGlyphs">2,000,000</text><text x="586.8" y="1215.21" font-size="17.8" fill="#2a2a2a" text-anchor="end" textLength="87.4" lengthAdjust="spacingAndGlyphs">1,000,000</text><text x="586.8" y="1252.84" font-size="17.8" fill="#2a2a2a" text-anchor="end" textLength="10.4" lengthAdjust="spacingAndGlyphs">0</text><rect x="1071.2" y="1161.2" width="12.8" height="12.8" fill="#4f81bd"/><text x="1088.2" y="1174.2" font-size="17.8" fill="#2a2a2a" textLength="55.2" lengthAdjust="spacingAndGlyphs">Actual</text><rect x="1071.2" y="1198.6" width="12.8" height="12.6" fill="#c0504d"/><text x="1088.2" y="1212.2" font-size="17.8" fill="#2a2a2a" textLength="33.6" lengthAdjust="spacingAndGlyphs">Bud</text><text x="658.6" y="1270.4" font-size="17.2" fill="#2a2a2a" text-anchor="end" textLength="202" lengthAdjust="spacingAndGlyphs" transform="rotate(-45 658.6 1270.4)">GLOBAL DEVELOPMENT</text><text x="770.4" y="1270.4" font-size="17.2" fill="#2a2a2a" text-anchor="end" textLength="144" lengthAdjust="spacingAndGlyphs" transform="rotate(-45 770.4 1270.4)">GLOBAL HEALTH</text><text x="882.4" y="1270.4" font-size="17.2" fill="#2a2a2a" text-anchor="end" textLength="238" lengthAdjust="spacingAndGlyphs" transform="rotate(-45 882.4 1270.4)">UNITED STATES PROGRAM</text><text x="994.4" y="1270.4" font-size="17.2" fill="#2a2a2a" text-anchor="end" textLength="218" lengthAdjust="spacingAndGlyphs" transform="rotate(-45 994.4 1270.4)">NON-PROGRAM GRANTS</text></svg>
<svg class="a" style="left:1174px;top:909px;overflow:hidden;" width="666" height="445.2" viewBox="1174 909 666 445.2"><rect x="1179.4" y="914.2" width="654.8" height="460" fill="#fff" stroke="#9e9e9e" stroke-width="1.3"/><path d="M1414.6 1183.8L1414.6 971.6A212.2 212.2 0 0 1 1558.9 1028.2Z" fill="#4f81bd" stroke="#4f81bd" stroke-width="0.6"/><path d="M1414.6 1183.8L1558.9 1028.2A212.2 212.2 0 1 1 1203.2 1202.4Z" fill="#c0504d" stroke="#c0504d" stroke-width="0.6"/><path d="M1414.6 1183.8L1203.2 1202.4A212.2 212.2 0 0 1 1356.2 979.8Z" fill="#9bbb59" stroke="#9bbb59" stroke-width="0.6"/><path d="M1414.6 1183.8L1356.2 979.8A212.2 212.2 0 0 1 1414.6 971.6Z" fill="#8064a2" stroke="#8064a2" stroke-width="0.6"/><rect x="1651.8" y="1072.6" width="12.4" height="12.4" fill="#4f81bd"/><text x="1668.8" y="1084.2" font-size="16.4" fill="#303030" textLength="66.4" lengthAdjust="spacingAndGlyphs">GLOBAL</text><text x="1668.8" y="1109.2" font-size="16.4" fill="#303030" textLength="126.2" lengthAdjust="spacingAndGlyphs">DEVELOPMENT</text><rect x="1651.8" y="1135.6" width="12.4" height="12.4" fill="#c0504d"/><text x="1668.8" y="1147.2" font-size="16.4" fill="#303030" textLength="135" lengthAdjust="spacingAndGlyphs">GLOBAL HEALTH</text><rect x="1651.8" y="1198.4" width="12.4" height="12.4" fill="#9bbb59"/><text x="1668.8" y="1210" font-size="16.4" fill="#303030" textLength="125" lengthAdjust="spacingAndGlyphs">UNITED STATES</text><text x="1668.8" y="1234.8" font-size="16.4" fill="#303030" textLength="89.8" lengthAdjust="spacingAndGlyphs">PROGRAM</text><rect x="1651.8" y="1261.6" width="12.4" height="12.4" fill="#8064a2"/><text x="1668.8" y="1273.4" font-size="16.4" fill="#303030" textLength="136.8" lengthAdjust="spacingAndGlyphs">NON-PROGRAM</text><text x="1668.8" y="1298.8" font-size="16.4" fill="#303030" textLength="67.2" lengthAdjust="spacingAndGlyphs">GRANTS</text></svg>
</main>
</div>
<svg class="a" id="frame" style="left:0;top:0" width="2560" height="1439" viewBox="0 0 2560 1439"><path fill-rule="evenodd" fill="#ffffff" d="M0 0H2560V1439H0Z M40 0H2520A40 40 0 0 1 2560 40V1399A40 40 0 0 1 2520 1439H40A40 40 0 0 1 0 1399V40A40 40 0 0 1 40 0Z"/><path fill-rule="evenodd" fill="#b1b3b7" d="M40 0H2520A40 40 0 0 1 2560 40V1399A40 40 0 0 1 2520 1439H40A40 40 0 0 1 0 1399V40A40 40 0 0 1 40 0Z M40 5.6H2520.6A34.4 34.4 0 0 1 2555 40V1399A34.4 34.4 0 0 1 2520.6 1433.4H40A34.4 34.4 0 0 1 5.6 1399V40A34.4 34.4 0 0 1 40 5.6Z"/></svg>
</body>
</html>
